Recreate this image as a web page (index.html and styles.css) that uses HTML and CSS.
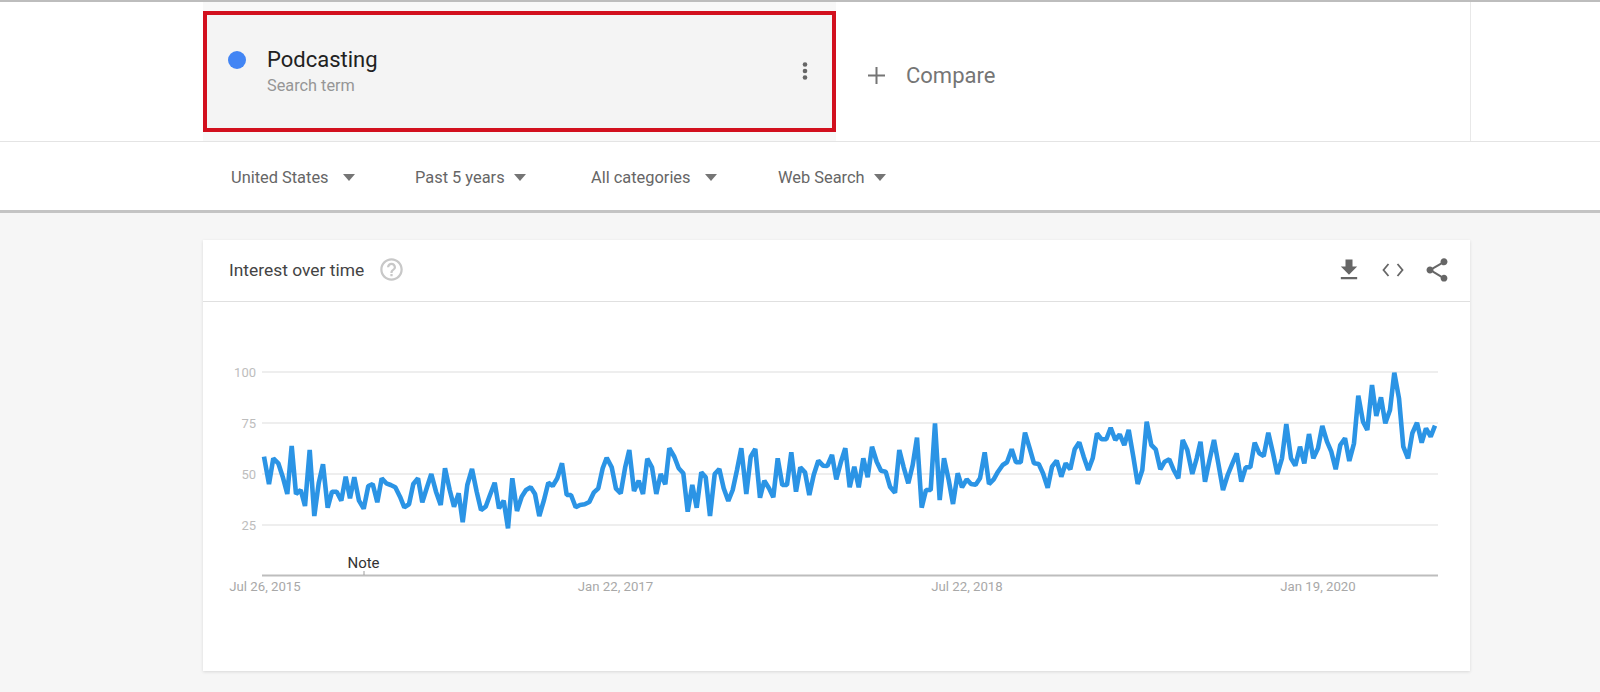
FILE: index.html
```html
<!DOCTYPE html>
<html lang="en">
<head>
    <meta charset="UTF-8">
    <meta name="viewport" content="width=device-width, initial-scale=1.0">
    <title>Podcasting - Explore - Google Trends</title>
    <link rel="stylesheet" href="styles.css">
</head>
<body>
    <!-- Search terms and filters -->
    <header class="explore-header">
        <div class="terms-row">
            <div class="terms">
                <div class="term-column">
                    <div class="term-box">
                        <span class="term-dot"></span>
                        <div class="term-text">
                            <div class="term-name">Podcasting</div>
                            <div class="term-type">Search term</div>
                        </div>
                        <svg class="term-menu" viewBox="0 0 6 18" aria-hidden="true">
                            <circle cx="3" cy="2.5" r="2.3"/>
                            <circle cx="3" cy="9" r="2.3"/>
                            <circle cx="3" cy="15.5" r="2.3"/>
                        </svg>
                    </div>
                </div>
                <div class="compare">
                    <svg class="compare-plus" viewBox="0 0 17 17" aria-hidden="true">
                        <path d="M8.5 0v17M0 8.5h17"/>
                    </svg>
                    <span>Compare</span>
                </div>
            </div>
        </div>
        <div class="filters">
            <div class="filter filter-wide">United States<span class="caret"></span></div>
            <div class="filter">Past 5 years<span class="caret"></span></div>
            <div class="filter filter-wide">All categories<span class="caret"></span></div>
            <div class="filter">Web Search<span class="caret"></span></div>
        </div>
    </header>

    <!-- Interest over time card -->
    <section class="card">
        <div class="card-header">
            <h2 class="card-title">Interest over time</h2>
            <svg class="help-icon" viewBox="0 0 24 24" aria-hidden="true">
                <path d="M11 18h2v-2h-2v2zm1-16C6.48 2 2 6.48 2 12s4.48 10 10 10 10-4.48 10-10S17.52 2 12 2zm0 18c-4.41 0-8-3.59-8-8s3.59-8 8-8 8 3.59 8 8-3.59 8-8 8zm0-14c-2.21 0-4 1.79-4 4h2c0-1.1.9-2 2-2s2 .9 2 2c0 2-3 1.75-3 5h2c0-2.25 3-2.5 3-5 0-2.21-1.79-4-4-4z"/>
            </svg>
            <div class="card-actions">
                <svg class="action-icon" viewBox="0 0 24 24" aria-hidden="true">
                    <path d="M19 9h-4V3H9v6H5l7 7 7-7zM5 18v2h14v-2H5z"/>
                </svg>
                <svg class="action-icon" viewBox="0 0 28 28" aria-hidden="true">
                    <path class="code-stroke" d="M9.500 8 4.500 14l5 6M18.500 8l5 6-5 6"/>
                </svg>
                <svg class="action-icon" viewBox="0 0 24 24" aria-hidden="true">
                    <path d="M18 16.08c-.76 0-1.44.3-1.96.77L8.91 12.7c.05-.23.09-.46.09-.7s-.04-.47-.09-.7l7.05-4.11c.54.5 1.25.81 2.04.81 1.66 0 3-1.34 3-3s-1.34-3-3-3-3 1.34-3 3c0 .24.04.47.09.7L8.04 9.81C7.5 9.31 6.79 9 6 9c-1.66 0-3 1.34-3 3s1.34 3 3 3c.79 0 1.5-.31 2.04-.81l7.12 4.16c-.05.21-.08.43-.08.65 0 1.61 1.31 2.92 2.92 2.92 1.61 0 2.92-1.31 2.92-2.92s-1.31-2.92-2.92-2.92z"/>
                </svg>
            </div>
        </div>

        <!-- viewBox uses page coordinates so the readings line up -->
        <svg class="chart" viewBox="203 302 1267 369">
            <g class="grid">
                <line x1="262" y1="372" x2="1438" y2="372"/>
                <line x1="262" y1="423" x2="1438" y2="423"/>
                <line x1="262" y1="474" x2="1438" y2="474"/>
                <line x1="262" y1="525" x2="1438" y2="525"/>
            </g>
            <g class="y-labels">
                <text x="256" y="377">100</text>
                <text x="256" y="428">75</text>
                <text x="256" y="479">50</text>
                <text x="256" y="530">25</text>
            </g>
            <line class="axis" x1="262" y1="575.500" x2="1438" y2="575.500"/>
            <line class="note-tick" x1="364" y1="571" x2="364" y2="575"/>
            <text class="note-label" x="363.500" y="568">Note</text>
            <g class="x-labels">
                <text x="265" y="590.500">Jul 26, 2015</text>
                <text x="615.500" y="590.500">Jan 22, 2017</text>
                <text x="967" y="590.500">Jul 22, 2018</text>
                <text x="1318" y="590.500">Jan 19, 2020</text>
            </g>
            <polyline class="trend-line" points="264,456.7 269,484 273.3,458.3 278.3,463.3 282.7,476.7 287.3,494 291.7,446 296,494 300.7,490 305,506 309.7,450 314.3,516 318.7,483.3 323,464.3 327.7,507.7 332,491.7 336.7,491.7 341.3,500.7 345.7,476.7 350,498.3 354.3,477.3 359,500.7 363.7,508.7 368.3,486 372.7,484 377.3,502.3 381.7,478.3 386.3,483.3 390.7,485 395.3,487.3 400,496.7 404.3,507.3 409,504.3 413.3,484 418,478.3 422.3,502.3 427,487.3 431.3,474 436,491.7 440.7,505 445,468.3 449.7,490 454,506.7 458.7,493.3 462.7,522.3 467.3,485 472,469 476.7,491.7 481,510 485.7,506.7 490,495 494.7,482.7 499,508.3 503.7,500.7 508,528.3 512.3,478.3 517,511 521.7,496.7 526,490 530.7,487.3 535,494 539.3,516 544,500 548.3,482.7 552.7,486 557.3,478.3 562,463.3 566.7,495 571,495 575.7,507.3 580,505 584.7,504.3 589.3,502 593.7,492.7 598.3,488.3 602.7,468.3 606.7,457.7 611.7,467.3 616,488.7 620.7,493.3 625.3,466.7 629.3,450 634,491 638.7,480.7 643,494 647.3,458.7 652,467.3 656.3,494 660.7,474 665.3,484.3 669.3,448.3 674.3,456.7 678.7,468.3 683.3,473.3 687.7,511.7 692.3,485 696.7,507.7 701.3,472.3 705.7,477.3 710,516 714.7,474 719.3,469 723.7,488.3 728.3,501 732.7,490 737,470 741.3,448.3 746.3,494 750.7,456.7 755.3,449 760,497.7 764.3,480.7 769,488.3 773.3,497.3 777.7,458.3 782.3,485 787,485 791.3,452.3 796,491.7 800.3,467.3 805,472.3 809.3,495 813.7,475 818.3,460.7 823,465.7 827.3,466 832,455 836.3,479.3 841,461.7 845.3,448.3 849.7,487.3 854.3,466.7 858.7,487.3 863.3,458.3 867.7,477.3 872,446.7 876.7,461.7 881,470.7 885.7,471.7 890,486.7 895,492.7 899.3,450 903.7,467.3 908.3,483.3 912.7,465 917,437.7 921.7,507.7 926,490 930.7,490 935,423.3 939.7,500 944,458.3 948.7,480 953,504 957.7,473.3 962,487.3 966.7,479.3 971,484 975.7,484.7 980,478.3 984.7,452.3 989,484 993.7,479.3 998,471.7 1002.7,465 1007,462.3 1011.7,449.3 1016,462.3 1020.7,462.3 1025,432.7 1029.7,448.3 1034,463.3 1038.7,464 1043,473.3 1047.7,487.7 1052,466.7 1056.7,460.7 1061.3,476.7 1065.7,463.3 1070.3,469.3 1074.7,449.3 1079.3,442.3 1083.7,456.7 1088.3,470 1092.7,458.3 1097,433.3 1101.7,439.3 1106.3,439.3 1110.7,427.7 1115.3,440 1119.7,434.3 1124.3,445 1128.7,430 1133.3,456.7 1137.7,484 1142.3,470 1146.7,421.7 1151.3,445 1155.7,449.3 1160.3,469.3 1164.7,461.7 1169.3,459.3 1173.7,470 1178.3,478.3 1182.7,440 1187.3,450 1192.3,474 1196.7,458.3 1200.5,441.7 1205,481.7 1209.5,460 1214,440 1218.3,463.3 1223,490 1227.7,475 1232,464.3 1236.7,453.3 1241.3,481.7 1245.7,467.3 1250.3,467.3 1254.7,442.7 1259.3,453.3 1263.7,456 1268.3,432.7 1273,453.3 1277.3,474 1282,458.3 1286.3,424 1291,458.3 1295.3,465.7 1300,446.7 1304.3,463.3 1309,434 1313.3,458.3 1318,448.3 1322.3,426 1327,441.7 1331.3,451.7 1335.7,469.3 1340.3,445 1345,438.3 1349.3,461 1354,443.3 1358.3,395.7 1363,421.7 1367.3,430 1372,385 1376.3,416 1381,397.3 1385.3,423.3 1390,410 1394.3,372.7 1399,398.3 1403.3,446.7 1408,458.3 1412.3,433.3 1417,422.7 1421.7,442.7 1426,428.3 1430.7,436.7 1435,425.7"/>
        </svg>
    </section>
</body>
</html>
```

FILE: styles.css
```css
/* General page styling */
body {
    margin: 0;
    background-color: #f6f6f6;
    font-family: Roboto, "Liberation Sans", sans-serif;
    color: #333;
}

/* Header with the search terms and filters */
.explore-header {
    background-color: #fff;
    border-top: 2px solid #bdbdbd;
    border-bottom: 3px solid #c4c4c4;
}

.terms-row {
    height: 139px;
    border-bottom: 1px solid #e4e4e4;
}

.terms {
    display: flex;
    width: 1268px;
    height: 100%;
    margin-left: 203px;
    border-right: 1px solid #e8e8e8;
    box-sizing: border-box;
}

.term-column {
    width: 633px;
    padding-top: 9px;
    box-sizing: border-box;
    background-color: #f8f8f8;
}

.term-box {
    display: flex;
    align-items: flex-start;
    height: 121px;
    padding: 31px 0 0 21px;
    box-sizing: border-box;
    border: 4px solid #d2101e;
    background-color: #f4f4f4;
}

.term-dot {
    flex: none;
    width: 18px;
    height: 18px;
    margin-top: 5px;
    border-radius: 50%;
    background-color: #4285f4;
}

.term-text {
    flex: 1;
    margin-left: 21px;
}

.term-name {
    font-size: 22px;
    line-height: 28px;
    color: #212121;
}

.term-type {
    margin-top: 2px;
    font-size: 16.3px;
    line-height: 20px;
    color: #969696;
}

.term-menu {
    flex: none;
    width: 6px;
    height: 18px;
    margin: 16px 24px 0 0;
    fill: #666;
}

.compare {
    display: flex;
    align-items: center;
    padding: 7px 0 0 32px;
    font-size: 22px;
    color: #757575;
}

.compare-plus {
    width: 17px;
    height: 17px;
    margin-right: 21px;
    stroke: #757575;
    stroke-width: 2;
}

/* Filter row */
.filters {
    display: grid;
    grid-template-columns: 184px 176px 187px auto;
    align-items: center;
    height: 68px;
    padding: 3px 0 0 231px;
    box-sizing: border-box;
    font-size: 16.4px;
    color: #666;
}

.filter {
    display: flex;
    align-items: center;
}

.caret {
    width: 0;
    height: 0;
    margin-left: 9px;
    border-top: 7px solid #757575;
    border-left: 6px solid transparent;
    border-right: 6px solid transparent;
}

.filter-wide .caret {
    margin-left: 14px;
}

/* Interest over time card */
.card {
    width: 1267px;
    height: 431px;
    margin: 27px 0 21px 203px;
    background-color: #fff;
    box-shadow: 0 1px 3px rgba(0, 0, 0, 0.12);
}

.card-header {
    display: flex;
    align-items: center;
    height: 62px;
    padding: 0 19px 2px 26px;
    box-sizing: border-box;
    border-bottom: 1px solid #e0e0e0;
}

.card-title {
    margin: 0;
    font-size: 17.4px;
    font-weight: 400;
    color: #444;
}

.help-icon {
    width: 27px;
    height: 27px;
    margin-left: 14px;
    fill: #c8c8c8;
}

.card-actions {
    display: flex;
    gap: 16px;
    margin-left: auto;
}

.action-icon {
    width: 28px;
    height: 28px;
    fill: #666;
}

.code-stroke {
    fill: none;
    stroke: #666;
    stroke-width: 1.8;
}

/* Chart */
.chart {
    display: block;
    width: 1267px;
    height: 369px;
}

.grid line {
    stroke: #e8e8e8;
    stroke-width: 1.5;
}

.axis {
    stroke: #bdbdbd;
    stroke-width: 2;
}

.note-tick {
    stroke: #9e9e9e;
}

.y-labels text {
    font-size: 13px;
    fill: #bdbdbd;
    text-anchor: end;
}

.x-labels text {
    font-size: 13.2px;
    fill: #a8a8a8;
    text-anchor: middle;
}

.note-label {
    font-size: 15px;
    fill: #333;
    text-anchor: middle;
}

.trend-line {
    fill: none;
    stroke: #2b94e5;
    stroke-width: 4.6;
    stroke-linejoin: bevel;
}
```
